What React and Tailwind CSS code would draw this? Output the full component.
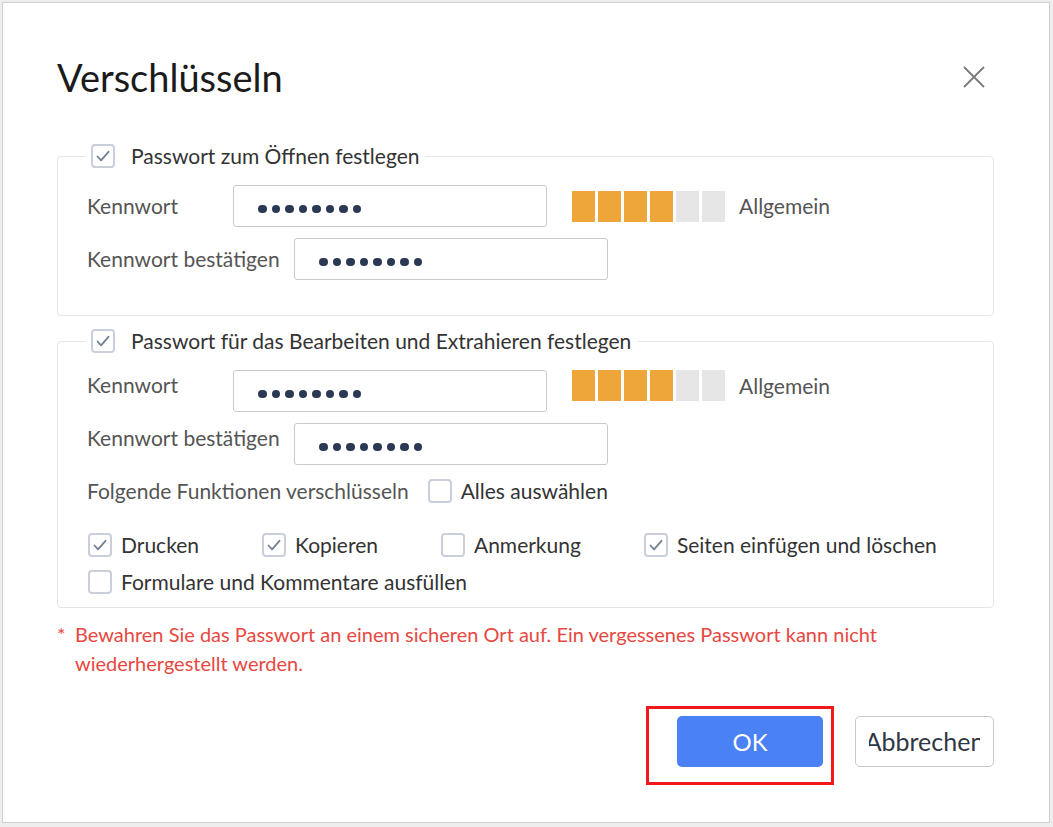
import { useState } from 'react';

function Check({ checked }) {
  return (
    <span className="flex h-6 w-6 shrink-0 items-center justify-center rounded-[4px] border-2 border-[#cacfdb] bg-white">
      {checked && (
        <svg viewBox="0 0 20 20" className="h-5 w-5" fill="none" stroke="#738094" strokeWidth="1.8" strokeLinecap="round" strokeLinejoin="round">
          <path d="M4.5 10.5l3.6 3.8L15.5 5.8" />
        </svg>
      )}
    </span>
  );
}

function Dots() {
  return (
    <div className="flex gap-[5px] pt-[6px]">
      {[0, 1, 2, 3, 4, 5, 6, 7].map((i) => (
        <span key={i} className="h-[8.5px] w-[8.5px] rounded-full bg-[#2b3955]" />
      ))}
    </div>
  );
}

function PasswordInput() {
  return (
    <div className="flex h-[42px] w-[314px] shrink-0 items-center rounded-[3px] border border-[#cacaca] bg-white pl-6">
      <Dots />
    </div>
  );
}

function Strength() {
  const levels = [1, 1, 1, 1, 0, 0];
  return (
    <div className="flex items-center">
      <div className="flex gap-[3px]">
        {levels.map((on, i) => (
          <span key={i} className={on ? 'h-[31px] w-[23px] bg-[#eea53a]' : 'h-[31px] w-[23px] bg-[#e6e6e6]'} />
        ))}
      </div>
      <span className="ml-[14px] text-[#555]">Allgemein</span>
    </div>
  );
}

function Legend({ children }) {
  return (
    <legend className="-ml-[2px] px-[6px] leading-6">
      <div className="flex items-center gap-4 text-[#333]">
        <Check checked />
        <span>{children}</span>
      </div>
    </legend>
  );
}

function Option({ checked, label }) {
  return (
    <label className="flex items-center gap-[9px] leading-6 text-[#333]">
      <Check checked={checked} />
      <span>{label}</span>
    </label>
  );
}

export default function App() {
  const [open] = useState(true);
  if (!open) return null;

  return (
    <div className="h-[827px] w-[1053px] overflow-hidden bg-[#eeeeee] pl-[2px] pt-[2px] font-[Lato,sans-serif] text-[21px]">
      <div className="h-[821px] w-[1048px] border border-[#cfcfcf] bg-white pl-[54px] pr-[55px] pt-[52px]">
        <div className="flex items-center justify-between">
          <h1 className="text-[38px] leading-[44px] text-[#1b1b1b]">Verschlüsseln</h1>
          <button type="button" aria-label="Schließen" className="mr-[9px]">
            <svg viewBox="0 0 22 22" className="h-[22px] w-[22px]" fill="none" stroke="#7a7a7a" strokeWidth="1.8">
              <path d="M1 1l20 20M21 1L1 21" />
            </svg>
          </button>
        </div>

        <fieldset className="mt-[45px] rounded-[4px] border border-[#e6e6e6] px-[29px] pb-[35px] pt-[17px]">
          <Legend>Passwort zum Öffnen festlegen</Legend>
          <div className="flex items-center">
            <span className="w-[146px] text-[#555]">Kennwort</span>
            <PasswordInput />
            <div className="ml-[25px]">
              <Strength />
            </div>
          </div>
          <div className="mt-[11px] flex items-center">
            <span className="w-[207px] text-[#555]">Kennwort bestätigen</span>
            <PasswordInput />
          </div>
        </fieldset>

        <fieldset className="mt-[13px] rounded-[4px] border border-[#e6e6e6] px-[29px] pb-[13px] pt-[17px]">
          <Legend>Passwort für das Bearbeiten und Extrahieren festlegen</Legend>
          <div className="flex items-start">
            <span className="mt-[2px] w-[146px] leading-[26px] text-[#555]">Kennwort</span>
            <PasswordInput />
            <div className="ml-[25px]">
              <Strength />
            </div>
          </div>
          <div className="mt-[11px] flex items-start">
            <span className="mt-[2px] w-[207px] leading-[26px] text-[#555]">Kennwort bestätigen</span>
            <PasswordInput />
          </div>
          <div className="mt-[14px] flex items-center leading-6">
            <span className="mr-[19px] text-[#555]">Folgende Funktionen verschlüsseln</span>
            <Option label="Alles auswählen" />
          </div>
          <div className="mt-[30px] flex flex-wrap gap-x-[63px] gap-y-[13px] pl-px">
            <Option checked label="Drucken" />
            <Option checked label="Kopieren" />
            <Option label="Anmerkung" />
            <Option checked label="Seiten einfügen und löschen" />
            <Option label="Formulare und Kommentare ausfüllen" />
          </div>
        </fieldset>

        <div className="mt-[12px] flex text-[20px] leading-[29px] text-[#e8483f]">
          <span className="w-[18px] shrink-0">*</span>
          <p>Bewahren Sie das Passwort an einem sicheren Ort auf. Ein vergessenes Passwort kann nicht wiederhergestellt werden.</p>
        </div>

        <div className="mt-[38px] flex justify-end gap-[32px]">
          <div className="relative">
            <button type="button" className="h-[51px] w-[146px] rounded-[5px] bg-[#4a81f4] text-[24px] text-white">
              OK
            </button>
            <span className="pointer-events-none absolute -left-[31px] -right-[11px] -top-[10px] -bottom-[18px] border-[3px] border-[#f01818]" />
          </div>
          <button type="button" className="flex h-[51px] w-[139px] items-center justify-center rounded-[5px] border border-[#c8c8c8] text-[25px] text-[#2f3744]">
            <span className="flex w-[111px] justify-center overflow-hidden whitespace-nowrap">
              <span className="shrink-0">Abbrechen</span>
            </span>
          </button>
        </div>
      </div>
    </div>
  );
}
